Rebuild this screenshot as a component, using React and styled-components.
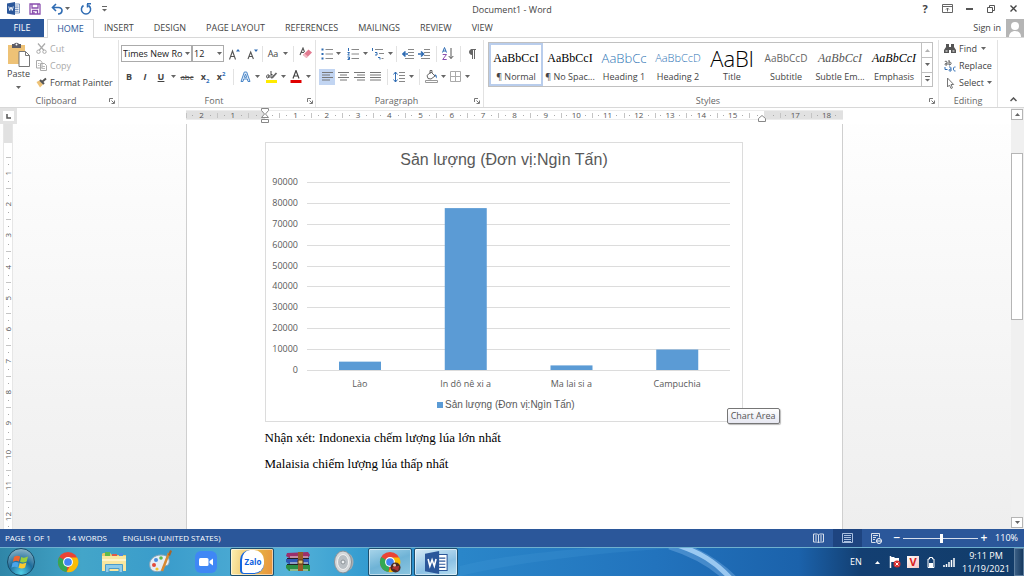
import React from "react";
import styled, { createGlobalStyle, css } from "styled-components";

const UI = `"Open Sans", "Noto Sans", sans-serif`;
const INK = "#444";
const BLUE = "#2b579a";
const LINE = "#d8d8d8";

const Global = createGlobalStyle`
  * { box-sizing: border-box; }
  body { margin: 0; background: #fff; font-family: ${UI}; font-size: 9px; line-height: 12px; color: ${INK}; }
  button, select, input { font: inherit; color: inherit; margin: 0; }
  button { border: 0; padding: 0; background: none; white-space: nowrap; }
  p, h1 { margin: 0; font-weight: 400; }
  svg { display: block; flex: none; }
`;

const Window = styled.div`
  display: flex;
  flex-direction: column;
  min-height: 100vh;
`;

/* ---------- title bar ---------- */
const TitleBar = styled.header`
  display: grid;
  grid-template-columns: 1fr auto 1fr;
  align-items: center;
  height: 19px;
  padding: 0 0 2px;
`;
const QuickAccess = styled.div`
  display: flex;
  align-items: center;
  padding-left: 5px;
`;
const WindowControls = styled.div`
  display: flex;
  align-items: center;
  justify-content: flex-end;
`;
const DocTitle = styled.h1`
  font-size: 9px;
  line-height: 12px;
  padding-top: 2px;
`;
const IconButton = styled.button`
  display: flex;
  align-items: center;
  justify-content: center;
  width: ${(p) => p.$w || 16}px;
  height: 16px;
  ${(p) => p.$active && css`background: #c2d5f2;`}
`;

/* ---------- tabs ---------- */
const TabBar = styled.nav`
  display: flex;
  height: 19px;
  border-bottom: 1px solid ${LINE};
`;
const Tab = styled.button`
  padding: 0 10px;
  ${(p) => p.$file && css`width: 44px; background: ${BLUE}; color: #fff; margin-right: 3px; padding: 0;`}
  ${(p) => p.$active && css`
    height: 19px; width: 47px; padding: 0; color: ${BLUE}; background: #fff;
    border: 1px solid ${LINE}; border-bottom: 0;
  `}
`;
const SignIn = styled.div`
  display: flex;
  align-items: center;
  gap: 5px;
  margin-left: auto;
  a { color: inherit; text-decoration: none; }
`;

/* ---------- ribbon ---------- */
const Ribbon = styled.section`
  display: flex;
  height: 70px;
  padding: 2px 0 0;
  border-bottom: 1px solid ${LINE};
`;
const Group = styled.div`
  display: flex;
  flex-direction: column;
  flex: ${(p) => (p.$grow ? "1 1 0" : "none")};
  min-width: 0;
  width: ${(p) => (p.$w ? p.$w + "px" : "auto")};
  padding: 0 ${(p) => p.$pad ?? 3}px;
  border-right: 1px solid #e2e2e2;
`;
const GroupBody = styled.div`
  display: flex;
  flex-direction: ${(p) => (p.$column ? "column" : "row")};
  flex: 1;
  min-height: 0;
  padding-top: ${(p) => (p.$column ? 2 : 0)}px;
`;
const GroupFooter = styled.footer`
  display: flex;
  align-items: center;
  height: 13px;
  span { flex: 1; text-align: center; color: #666; }
`;
const PasteButton = styled.button`
  display: flex;
  flex-direction: column;
  align-items: center;
  width: 31px;
  padding-top: 2px;
  gap: 1px;
`;
const CommandList = styled.div`
  display: flex;
  flex-direction: column;
  padding-left: 2px;
`;
const Command = styled.button`
  display: flex;
  align-items: center;
  gap: 3px;
  height: 17px;
  color: ${(p) => (p.disabled ? "#aaa" : INK)};
`;
const ToolRow = styled.div`
  display: flex;
  align-items: center;
  height: 23px;
`;
const Separator = styled.span`
  width: ${(p) => p.$w || 8}px;
  height: 16px;
  background: linear-gradient(#e2e2e2, #e2e2e2) center / 1px 100% no-repeat;
`;
const Combo = styled.div`
  position: relative;
  width: ${(p) => p.$w}px;
  select {
    appearance: none;
    width: 100%;
    height: 17px;
    padding: 0 7px 0 1px;
    border: 1px solid #ababab;
    border-radius: 0;
    background: #fff;
    color: #222;
  }
  svg { position: absolute; right: 2px; top: 7px; }
`;
const Letter = styled.span`
  font-size: ${(p) => p.$size || 9}px;
  font-weight: ${(p) => (p.$bold ? 700 : 400)};
  font-style: ${(p) => (p.$italic ? "italic" : "normal")};
  text-decoration: ${(p) => p.$line || "none"};
  sub, sup { font-size: 6px; line-height: 0; color: #2b6cb8; }
`;

const Gallery = styled.div`
  display: flex;
  flex: 1;
  height: 45px;
  margin: 2px 2px 0 1px;
  border: 1px solid #c0c0c0;
`;
const StyleTiles = styled.div`
  display: grid;
  grid-template-columns: repeat(8, 1fr);
  flex: 1;
  min-width: 0;
`;
const StyleTile = styled.button`
  display: flex;
  flex-direction: column;
  justify-content: space-between;
  align-items: center;
  min-width: 0;
  padding: 0 1px 1px;
  border: 2px solid ${(p) => (p.$active ? "#b9cdec" : "transparent")};
`;
const Sample = styled.span`
  height: 26px;
  line-height: 26px;
  font-family: ${(p) => (p.$serif ? `"Liberation Serif", serif` : UI)};
  font-size: ${(p) => p.$size || 12}px;
  font-weight: ${(p) => (p.$light ? 300 : 400)};
  font-style: ${(p) => (p.$italic ? "italic" : "normal")};
  color: ${(p) => p.$color || "#000"};
`;
const GalleryScroll = styled.div`
  display: grid;
  grid-template-rows: repeat(3, 1fr);
  width: 11px;
  border-left: 1px solid #c0c0c0;
  button { display: flex; align-items: center; justify-content: center; }
  button:disabled { opacity: 0.5; }
  button + button { border-top: 1px solid #c0c0c0; }
`;
const CollapseArea = styled.div`
  display: flex;
  align-items: flex-end;
  justify-content: flex-end;
  width: 26px;
  padding-right: 3px;
`;

/* ---------- document area ---------- */
const Workspace = styled.main`
  display: grid;
  grid-template-columns: 17px minmax(0, 1fr) 13px;
  grid-template-rows: 16px minmax(0, 1fr);
  flex: 1;
  background: linear-gradient(#fff, #fdfdfd 10%, #eeeeee);
`;
const TabStop = styled.button`
  display: flex;
  align-items: center;
  justify-content: center;
  border: 3px solid #e3e3e3;
  background: #fff;
`;
const RulerTrack = styled.div`
  display: flex;
  justify-content: center;
  align-items: flex-start;
  padding-top: 2px;
  background: #fff;
`;
const Ruler = styled.div`
  position: relative;
  display: grid;
  grid-template-columns: repeat(21, 1fr);
  width: 657px;
  height: 10px;
  border: solid #ececec;
  border-width: 1px 0;
  background: linear-gradient(90deg, #e1e1e1 12%, #fff 12%, #fff 88%, #e1e1e1 88%);
`;
const RulerCell = styled.span`
  display: flex;
  align-items: center;
  justify-content: space-between;
  font-size: 8px;
  line-height: 8px;
  color: #555;
  padding-right: 6px;
  &::before { content: ""; width: 1px; height: 5px; background: #c4c4c4; }
`;
const Dot = styled.i`
  width: 1px;
  height: 1px;
  background: #aaa;
`;
const Marker = styled.span`
  position: absolute;
  left: ${(p) => p.$at};
  top: ${(p) => p.$top || 0}px;
`;
const SideRuler = styled.div`
  display: flex;
  flex-direction: column;
  width: 10px;
  height: 100%;
  margin-left: 3px;
  border: solid #e6e6e6;
  border-width: 0 1px;
  background: #fff;
`;
const SideMargin = styled.div`
  flex: none;
  height: 19px;
  background: #e1e1e1;
`;
const SideTicks = styled.div`
  flex: 1 1 0;
  min-height: 0;
  padding-top: 14px;
  overflow-x: visible;
  overflow-y: clip;
`;
const SideCell = styled.div`
  display: flex;
  flex-direction: column;
  align-items: center;
  justify-content: space-between;
  height: 31px;
  padding-bottom: 6px;
  font-size: 8px;
  line-height: 8px;
  color: #555;
  &:nth-child(3n) { height: 32px; }
  &::before { content: ""; width: 5px; height: 1px; background: #c4c4c4; }
  span { writing-mode: vertical-rl; transform: rotate(180deg); }
`;
const PageArea = styled.div`
  display: flex;
  justify-content: center;
  min-width: 0;
`;
const Page = styled.article`
  width: 657px;
  padding: 18px 78px 0;
  border: solid #cfcfcf;
  border-width: 0 1px;
  background: #fff;
  font-family: "Liberation Serif", serif;
  font-size: 13px;
  line-height: 26px;
  color: #000;
`;
const ChartFrame = styled.figure`
  position: relative;
  width: 478px;
  margin: 0 0 3px;
  border: 1px solid #dcdcdc;
`;
const Tooltip = styled.span`
  position: absolute;
  right: -38px;
  bottom: -3px;
  padding: 1px 3px;
  border: 1px solid #767676;
  border-radius: 2px;
  background: linear-gradient(#fff, #e6e7f1);
  font: 9px/12px ${UI};
  color: #555;
  box-shadow: 1px 1px 1px #bbb;
`;
const ScrollBar = styled.div`
  display: flex;
  flex-direction: column;
  grid-row: 1 / 3;
  grid-column: 3;
  padding: 1px 1px 1px 0;
  background: #f0f0f0;
`;
const ScrollArrow = styled.button`
  display: flex;
  align-items: center;
  justify-content: center;
  height: 11px;
  border: 1px solid #b5b5b5;
  background: #fff;
`;
const ScrollTrack = styled.div`
  flex: 1;
  display: grid;
  grid-template-rows: 33fr 168fr 197fr;
`;
const ScrollThumb = styled.div`
  grid-row: 2;
  border: 1px solid #b5b5b5;
  background: #fff;
`;

/* ---------- status bar ---------- */
const StatusBar = styled.footer`
  display: flex;
  align-items: center;
  height: 18px;
  padding: 0 6px 0 5px;
  background: ${BLUE};
  color: #fff;
  gap: 16px;
  font-size: 8px;
`;
const ViewControls = styled.div`
  display: flex;
  align-items: center;
  margin-left: auto;
`;
const ViewButton = styled.button`
  display: flex;
  align-items: center;
  justify-content: center;
  width: 29px;
  height: 18px;
  background: ${(p) => (p.$active ? "#1e4480" : "none")};
`;
const ZoomStep = styled.button`
  width: 12px;
  font-size: 12px;
  font-weight: 600;
`;
const ZoomRange = styled.input`
  appearance: none;
  width: 75px;
  height: 10px;
  background: linear-gradient(#d5deec, #d5deec) center / 100% 1px no-repeat;
  &::-webkit-slider-thumb { appearance: none; width: 3px; height: 9px; background: #fff; }
`;
const ZoomValue = styled.button`
  width: 28px;
  font-size: 9px;
  text-align: right;
`;

/* ---------- taskbar ---------- */
const Taskbar = styled.footer`
  position: relative;
  display: flex;
  align-items: stretch;
  height: 29px;
  border-top: 1px solid #6fb0cf;
  color: #fff;
  background: linear-gradient(90deg, #2f86a8, #43a5c9 8%, #3a9ccb 16%, #55b2d8 28%, #339bd0 36%, #2a86c9 45%, #2273bd 64%, #1b62ab 78%, #133f72 84%, #123c69);
`;
const Glow = styled.svg`
  position: absolute;
  inset: 0;
  width: 100%;
  height: 100%;
`;
const StartButton = styled.button`
  position: relative;
  width: 44px;
  padding-left: 7px;
  margin-right: 2px;
`;
const TaskList = styled.div`
  position: relative;
  display: flex;
  gap: 2px;
`;
const highlights = {
  gold: "linear-gradient(100deg, #fdf0b4, #e6b145 60%, #e9923c)",
  glass: "linear-gradient(160deg, #a9d5ea, #6fb3d6 50%, #8cc6e0)",
  bright: "linear-gradient(160deg, #d7ebf6, #8cc1e4 60%, #b5def2)",
};
const TaskButton = styled.button`
  display: flex;
  align-items: center;
  justify-content: center;
  width: 44px;
  ${(p) => p.$look && css`
    background: ${highlights[p.$look]};
    border: 1px solid #1d4f6e;
    box-shadow: inset 0 0 0 1px #ffffff88;
    border-radius: 2px;
  `}
`;
const Tray = styled.div`
  position: relative;
  display: flex;
  align-items: center;
  margin-left: auto;
`;
const TrayItem = styled.button`
  display: flex;
  align-items: center;
  justify-content: center;
  width: ${(p) => p.$w || 18}px;
`;
const Clock = styled.time`
  width: 56px;
  text-align: center;
  line-height: 13px;
  white-space: pre-line;
`;
const ShowDesktop = styled.button`
  align-self: stretch;
  width: 10px;
  border: 1px solid #5e7fa0;
  background: linear-gradient(90deg, #3a5f85, #16385e);
`;

/* ---------- icons ---------- */
const Svg = ({ w = 12, h, v, children, ...rest }) => (
  <svg width={w} height={h ?? w} viewBox={v || `0 0 ${w} ${h ?? w}`} fill="none" aria-hidden="true" {...rest}>
    {children}
  </svg>
);
const Caret = ({ up }) => (
  <Svg w={5} h={3}><path d={up ? "M0 3 2.5 0 5 3z" : "M0 0h5L2.5 3z"} fill="#666" /></Svg>
);
const DropDown = ({ w = 8, label }) => (
  <IconButton $w={w} aria-label={label}><Caret /></IconButton>
);
const WordMark = ({ size = 13 }) => (
  <Svg w={size} v="0 0 26 26">
    <path d="M14 4h11v18H14z" fill="#fff" stroke={BLUE} strokeWidth="1.2" />
    <path d="M16 8h7M16 11.500h7M16 15h7M16 18.500h7" stroke={BLUE} strokeWidth="1.3" />
    <path d="M0 3 16 0v26L0 23z" fill={BLUE} />
    <path d="m3.500 9 2 8 2.500-7 2.500 7 2-8" stroke="#fff" strokeWidth="1.800" />
  </Svg>
);
const SaveIcon = () => (
  <Svg w={12}>
    <path d="M1 1h9.500l.5.500V11H1zM3 1v4h6V1M3.500 11V7.500h5V11M5 9v2" stroke="#8a4fae" strokeWidth="1.300" />
  </Svg>
);
const UndoIcon = () => (
  <Svg w={13} h={12}><path d="M5 1 1.500 4.500 5 8M2 4.500h5.500c5 0 4.500 6-.5 6.500" stroke="#2f6cb3" strokeWidth="1.600" /></Svg>
);
const RedoIcon = () => (
  <Svg w={12}><path d="M8.500 2.500a4.600 4.600 0 1 1-5 0M7 .8h4M7.500 1v3.500" stroke="#2f6cb3" strokeWidth="1.500" /></Svg>
);
const CustomizeIcon = () => (
  <Svg w={5} h={6}><path d="M0 .5h5" stroke="#666" /><path d="M0 3h5L2.500 5.500z" fill="#666" /></Svg>
);
const PasteIcon = () => (
  <Svg w={23} h={25}>
    <path d="M1 3h17v19H1z" fill="#eec276" />
    <path d="M5 2h2a3 3 0 0 1 5 0h2v4H5z" fill="#5c5c66" />
    <circle cx="9.500" cy="2.500" r="1" fill="#fff" />
    <path d="M12 9.500h6.500l4 4v11H12z" fill="#fff" stroke="#777" />
    <path d="M18.500 9.500v4h4" stroke="#777" />
  </Svg>
);
const CutIcon = () => (
  <Svg w={11}><path d="m2 .5 6 7M9 .5l-6 7" stroke="#aaa" strokeWidth="1.200" /><circle cx="2.500" cy="8.700" r="1.700" stroke="#aaa" /><circle cx="8.500" cy="8.700" r="1.700" stroke="#aaa" /></Svg>
);
const CopyIcon = () => (
  <Svg w={11}><path d="M.5.5h4l1.500 2v5.500H.5zM4.500 3.500h4l2 2v5h-6z" fill="#fff" stroke="#aaa" /><path d="M2 3.500h1.500M2 5.500h1.500M6 6.500h3M6 8.500h3" stroke="#bbb" /></Svg>
);
const PainterIcon = () => (
  <Svg w={11}><path d="m.5 5 3-1.500 3.500 4L4 10.500z" fill="#eec276" /><path d="m4 3 4 4M6.500 4.500l3.500-3" stroke="#555" strokeWidth="2" /></Svg>
);
const LauncherIcon = () => (
  <Svg w={6}><path d="M.5 4V.5H4M2.500 2.500 5 5M5.500 2.500v3h-3" stroke="#777" /></Svg>
);
const ClearIcon = () => (
  <Svg w={13}>
    <path d="m1 8 3-7 1.500 4M2 5.500h3" stroke="#555" strokeWidth="1.100" />
    <path d="m4 8 5.500-5.500L13 5.500 7.500 11z" fill="#e27a90" /><path d="m4 8 1.500-1.500L9 9.500 7.500 11z" fill="#f3b9c4" />
  </Svg>
);
const GrowIcon = ({ down }) => (
  <Svg w={11} h={12}>
    <path d={down ? "m1 11 2.700-7 2.700 7M2 8.500h3.500" : "m.5 11.500 3-8.500 3 8.500M1.500 8.500h4"} stroke="#555" strokeWidth="1.100" />
    <path d={down ? "M7 1.500h4L9 4z" : "M7 3.500h4L9 1z"} fill="#2f6cb3" />
  </Svg>
);
const EffectsIcon = () => (
  <Svg w={11} h={12}><path d="M1 10.500 4.300 1h2.400L10 10.500H8L7.300 8H3.700L3 10.500zM4.300 6.300h2.400L5.500 3z" fill="#e4effa" stroke="#4a86c8" /></Svg>
);
const HighlightIcon = () => (
  <Svg w={13}>
    <path d="M1 10h11v3H1z" fill="#ffeb00" />
    <path d="M3.500 4.500C1.500 4.500 1 8 2.500 8s1.500-3 1.500-3v3M6 1v7c3 0 3-4 0-3.500" stroke="#444" />
    <path d="m7 8 4.500-5" stroke="#666" strokeWidth="1.800" />
  </Svg>
);
const FontColorIcon = () => (
  <Svg w={12} h={13}><path d="m3 8.500 3-8 3 8M4 6h4" stroke="#444" strokeWidth="1.200" /><path d="M.5 10h11v3H.5z" fill="#e00000" /></Svg>
);
const BulletsIcon = () => (
  <Svg w={12}><path d="M.5 1.500h2M.5 6h2M.5 10.500h2" stroke="#2f6cb3" strokeWidth="2" /><path d="M4.500 1.500H12M4.500 6H12M4.500 10.500H12" stroke="#888" /></Svg>
);
const NumberingIcon = () => (
  <Svg w={12}><path d="M1.500 0v3M.5 4.500h2L.8 7h1.900M.5 9h2v2.500h-2M1 10.300h1.500" stroke="#2f6cb3" /><path d="M4.500 1.500H12M4.500 6H12M4.500 10.500H12" stroke="#888" /></Svg>
);
const MultilevelIcon = () => (
  <Svg w={13} h={12}><path d="M1.500 0v3M4 4.500h2v2.500H4M7 9.500h2v2" stroke="#2f6cb3" /><path d="M4 1.500h8M8 5.500h5M10.500 10.500h2" stroke="#888" /></Svg>
);
const IndentIcon = ({ right }) => (
  <Svg w={12} h={10}>
    <path d="M6 .5h6M6 3.500h6M6 6.500h6M3 9.500h9" stroke="#888" />
    <path d={right ? "M0 5h5M3 2.500 5.500 5 3 7.500" : "M6 5H1M3.500 2.500 1 5l2.500 2.500"} stroke="#2f6cb3" strokeWidth="1.600" />
  </Svg>
);
const SortIcon = () => (
  <Svg w={12} h={13}>
    <path d="m.5 5.500 2-5 2 5M1 4h3" stroke="#2f6cb3" /><path d="M.7 7.500h3.800l-3.800 5h4" stroke="#8a4fae" />
    <path d="M9 1v10.500M6.700 9 9 11.500 11.300 9" stroke="#555" />
  </Svg>
);
const PilcrowIcon = () => (
  <Svg w={8} h={10}><path d="M4 .5a2.500 2.500 0 0 0 0 5z" fill="#666" stroke="#666" /><path d="M4.500 0v10M6.500 0v10M3 .5h5" stroke="#666" /></Svg>
);
const AlignIcon = ({ kind }) => {
  const spans = { left: [[0, 11], [0, 8]], center: [[0, 11], [2, 9]], right: [[0, 11], [3, 11]], justify: [[0, 11], [0, 11]] }[kind];
  return (
    <Svg w={11} h={9}>
      {[0.5, 3, 5.5, 8].map((y, i) => <path key={y} d={`M${spans[i % 2][0]} ${y}H${spans[i % 2][1]}`} stroke="#777" />)}
    </Svg>
  );
};
const SpacingIcon = () => (
  <Svg w={12}><path d="M2.500 1v10M.5 3.500l2-2.500 2 2.500M.5 8.500l2 2.500 2-2.500" stroke="#2f6cb3" /><path d="M6 1.500h6M6 4.500h6M6 7.500h6M6 10.500h6" stroke="#888" /></Svg>
);
const ShadingIcon = () => (
  <Svg w={13}>
    <path d="m2 5.500 4-3.500 4 4-4 3-3-.5z" fill="#fff" stroke="#666" /><path d="M5 4V.5h2V3" stroke="#666" />
    <path d="M9.500 4.500c2.500 0 2.500 2 2 4z" fill="#2f6cb3" /><path d="M.5 10.500h12v2H.5z" fill="#fff" stroke="#999" />
  </Svg>
);
const BordersIcon = () => (
  <Svg w={11}><path d="M.5.5h10v10H.5zM5.500.5v10M.5 5.500h10" stroke="#aaa" /></Svg>
);
const FindIcon = () => (
  <Svg w={12} h={11}><path d="M2 1h3v3h2V1h3v3l2 3v3H7V7H5v3H0V7l2-3z" fill="#555" /><path d="M1.500 8h2M8.500 8h2" stroke="#fff" /></Svg>
);
const ReplaceIcon = () => (
  <Svg w={12}>
    <path d="M.8 1.500c3-.8 2.200 1 2.200 3.500-3 .5-2.500-2 0-1.800M5 0v5c3 0 2.500-3.500 0-3" stroke="#555" />
    <path d="M5 7c2.500-.5 2 1 2 4-2.800.5-2.500-2 0-2M11.500 7c-2.500-1-3 4.500 0 4M1 7v2.500h2.500" stroke="#2f6cb3" />
  </Svg>
);
const SelectIcon = () => (
  <Svg w={12}><path d="M3.500 1v9l2-2 1.500 3.500 1.500-.7L7 7.500h2.700z" fill="#fff" stroke="#777" /></Svg>
);
const ChevronUp = () => (
  <Svg w={7} h={5}><path d="M.5 4 3.500 1l3 3" stroke="#555" strokeWidth="1.500" /></Svg>
);
const RibbonOptionsIcon = () => (
  <Svg w={11} h={9}><path d="M.5.5h10v8H.5zM.5 2.500h10M5.500 7.500V4M4 5.500 5.500 4 7 5.500" stroke="#666" /></Svg>
);
const Avatar = () => (
  <Svg w={18} h={18}><path d="M0 0h18v18H0z" fill="#b5b5b5" /><circle cx="9" cy="7" r="4" fill="#fff" /><path d="M3 18c0-8 12-8 12 0z" fill="#fff" /></Svg>
);
const HourglassMarker = () => (
  <Svg w={8} h={15}>
    <path d="M.5.5h7v2l-3 3.500 3 3.500h-7L3.500 6 .5 2.500z" fill="#fff" stroke="#888" />
    <path d="M.5 11.500h7v3h-7z" fill="#fff" stroke="#888" />
  </Svg>
);
const RightMarker = () => (
  <Svg w={8} h={7}><path d="M.5 6.500V3.500L4 .5l3.500 3v3z" fill="#fff" stroke="#888" /></Svg>
);
const ReadIcon = () => (
  <Svg w={11} h={10}><path d="M.5 1h4l1 1 1-1h4v8h-4l-1 1-1-1h-4zM5.500 2v8" stroke="#d5deec" /><path d="M2 3h2M2 5h2M2 7h2M7 3h2M7 5h2M7 7h2" stroke="#d5deec" /></Svg>
);
const PrintIcon = () => (
  <Svg w={11} h={10}><path d="M.5.5h10v9H.5zM2 2.500h7M2 4.500h7M2 6.500h7M2 8.500h7" stroke="#a9bfe0" /></Svg>
);
const WebIcon = () => (
  <Svg w={11} h={11}><path d="M.5.5h8v4M.5.5v9h4M2 2.500h5M2 4.500h3M2 6.500h2" stroke="#d5deec" /><circle cx="8" cy="8" r="2.500" fill={BLUE} stroke="#fff" /><path d="M6 8h4" stroke="#fff" /></Svg>
);
const StartOrb = () => (
  <Svg w={28} h={28}>
    <defs><radialGradient id="orb" cx=".5" cy=".9" r=".9"><stop offset="0" stopColor="#4fd0e8" /><stop offset=".5" stopColor="#1f6d9c" /><stop offset="1" stopColor="#8fb6c8" /></radialGradient></defs>
    <circle cx="14" cy="14" r="13.500" fill="url(#orb)" stroke="#164b68" />
    <path d="M7 9c2-1.500 4-1.500 6.200-.5l-1.200 5c-2-1-4-1-6.200.3z" fill="#f0642f" />
    <path d="M14.200 9c2.200 1 4.300.8 6.800-.5l-1.300 5c-2.200 1.300-4.500 1.200-6.700.3z" fill="#9bcf3a" />
    <path d="M5.500 15c2-1.200 4-1.200 6.200-.3l-1.200 4.800c-2-1-4-.8-6 .3z" fill="#4aa4ea" />
    <path d="M12.700 15c2.200 1 4.500.8 6.700-.4l-1.300 4.900c-2.200 1.300-4.300 1.200-6.600.2z" fill="#fcc92e" />
  </Svg>
);
const ChromeIcon = ({ badge }) => (
  <Svg w={22} v="0 0 24 24">
    <circle cx="12" cy="12" r="11" fill="#ea4335" />
    <path d="M2.500 6.500 12 12l-1.500 11A11 11 0 0 1 2.500 6.500z" fill="#34a853" />
    <path d="M12 7h10a11 11 0 0 1-11.500 16l5-9z" fill="#fbbc05" />
    <circle cx="12" cy="12" r="5.400" fill="#fff" /><circle cx="12" cy="12" r="4.200" fill="#4285f4" />
    {badge && <><circle cx="18" cy="18" r="5.500" fill="#4a2a25" /><path d="m14 19 3-4 2 2 3-1-1 6-4-2z" fill="#a33" /><circle cx="17" cy="15.500" r="1.500" fill="#e9c9b4" /></>}
  </Svg>
);
const FolderIcon = () => (
  <Svg w={26} h={24}>
    <path d="M2 3h7l2 2h14v16H1V4z" fill="#e9c867" />
    <path d="M4 2h5v5H4z" fill="#5db94c" /><path d="M11 4h5v3h-5z" fill="#e05a4a" /><path d="M18 3h4v4h-4z" fill="#4b8fe0" />
    <path d="M1 6h24v15H1z" fill="#f9e7a0" /><path d="M1 10h24" stroke="#fff4c8" strokeWidth="2" />
    <path d="M4.500 22.500v-8h17v8h-3.500v-4H8v4z" fill="#8ccbea" stroke="#4b9ccb" />
  </Svg>
);
const PaintIcon = () => (
  <Svg w={25} h={24}>
    <path d="M2 17C0 10 6 5 13 5s9 4 8 8-5 2-6 4 0 4-4 4.500S3 21 2 17z" fill="#e5eef5" stroke="#8aa4b5" />
    <circle cx="6" cy="15" r="2" fill="#e34b3b" /><circle cx="8" cy="10" r="2" fill="#4b8fe0" /><circle cx="13" cy="8" r="1.800" fill="#5db94c" /><circle cx="9" cy="19" r="1.600" fill="#f3c531" />
    <path d="M21 3 14 21" stroke="#d78931" strokeWidth="2.500" /><path d="m20 5 2-5 2 1-2 5z" fill="#a8642a" />
  </Svg>
);
const ZoomAppIcon = () => (
  <Svg w={22}><rect width="22" height="22" rx="6" fill="#3f87f5" /><rect x="4" y="7" width="9.500" height="8" rx="1.500" fill="#fff" /><path d="m14.500 10 3.500-2.500v7L14.500 12z" fill="#fff" /></Svg>
);
const ZaloBadge = styled.span`
  display: flex;
  align-items: center;
  justify-content: center;
  width: 24px;
  height: 24px;
  border: solid #1366e0;
  border-width: 0 0 1px 2px;
  border-radius: 10px 10px 10px 4px;
  background: #fff;
  color: #0b5fe0;
  font-size: 8px;
  font-weight: 700;
`;
const ArchiveIcon = () => (
  <Svg w={26} h={20}>
    <path d="m2 1 21-1 2 3-2 3H4L1 4z" fill="#9c2f6c" /><path d="M1 7h23v5H4L1 10z" fill="#2f57b5" /><path d="M1 13h24v6H4l-3-3z" fill="#2b8f45" />
    <path d="M5 5h18M5 11h18M5 18h18" stroke="#efe7d6" /><path d="M2 6.500h22M2 12.500h22" stroke="#222" />
    <path d="M13 0h5v19h-5z" fill="#9a5a28" /><path d="M13 8h5v4h-5z" fill="#e5c36b" stroke="#5a3512" />
  </Svg>
);
const SpeakerIcon = () => (
  <Svg w={20} h={24}>
    <ellipse cx="13" cy="12" rx="6.500" ry="9" fill="#a7adb2" /><ellipse cx="9" cy="12" rx="8.500" ry="11" fill="#d5d8da" stroke="#8b9196" />
    <ellipse cx="9" cy="12" rx="5.500" ry="7.500" fill="#b8bec3" stroke="#f2f2f2" /><circle cx="9" cy="12" r="2" fill="#eef1f3" stroke="#8b9196" />
  </Svg>
);
const FlagIcon = () => (
  <Svg w={12}><path d="M1.500 0v12" stroke="#fff" strokeWidth="1.500" /><path d="M2 1h3l1 1h4v5H6L5 6H2z" fill="#fff" /><circle cx="8" cy="8" r="3.500" fill="#d93030" /><path d="m6.500 6.500 3 3m0-3-3 3" stroke="#fff" /></Svg>
);
const UnikeyBadge = styled.span`
  width: 12px;
  height: 12px;
  line-height: 12px;
  background: linear-gradient(135deg, #fff, #f5c5c0);
  color: #d81e1e;
  font-size: 11px;
  font-weight: 700;
`;
const BatteryIcon = () => (
  <Svg w={8} h={11}><path d="M2.500.5h3v1.500h1.500v8.500H1V2h1.500z" stroke="#fff" /><path d="M2 6h4v4H2z" fill="#fff" /></Svg>
);
const SignalIcon = () => (
  <Svg w={12} h={9}><path d="M1 9V7M3.500 9V6M6 9V4M8.500 9V2M11 9V0" stroke="#fff" strokeWidth="1.500" /></Svg>
);

/* ---------- chart ---------- */
const data = [
  { name: "Lào", value: 4000 },
  { name: "In dô nê xi a", value: 77500 },
  { name: "Ma lai si a", value: 2200 },
  { name: "Campuchia", value: 9800 },
];
const SERIES = "Sản lượng (Đơn vị:Ngìn Tấn)";
const ChartDrawing = styled.svg`
  width: 100%;
  height: auto;
  font-family: ${UI};
  font-size: 9px;
  fill: #595959;
  .title { font: 16px "Liberation Sans", sans-serif; }
  .legend { font: 10px "Liberation Sans", sans-serif; }
`;
const Chart = () => {
  const left = 41, right = 464, top = 39, base = 227;
  const slot = (right - left) / data.length;
  const y = (v) => base - (v / 90000) * (base - top);
  return (
    <ChartDrawing viewBox="0 0 476 278" role="img" aria-label={SERIES}>
      <text className="title" x="238" y="22" textAnchor="middle">{SERIES}</text>
      {Array.from({ length: 10 }, (_, i) => i * 10000).map((v) => (
        <g key={v}>
          <path d={`M${left} ${Math.round(y(v)) + 0.5}H${right}`} stroke="#dcdcdc" />
          <text x="32" y={Math.round(y(v)) + 3} textAnchor="end">{v}</text>
        </g>
      ))}
      {data.map((d, i) => (
        <g key={d.name}>
          <rect x={left + slot * i + 32} y={y(d.value)} width="42" height={base - y(d.value)} fill="#5b9bd5" />
          <text x={left + slot * (i + 0.5)} y={base + 17} textAnchor="middle">{d.name}</text>
        </g>
      ))}
      <rect x="171" y="259" width="6" height="6" fill="#5b9bd5" />
      <text className="legend" x="179" y="265">{SERIES}</text>
    </ChartDrawing>
  );
};

const horizontal = [2, 1, "", ...Array.from({ length: 15 }, (_, i) => i + 1), "", 17, 18];
const vertical = Array.from({ length: 12 }, (_, i) => i + 1);
const styleSet = [
  { name: "¶ Normal", text: "AaBbCcI", active: true, serif: true },
  { name: "¶ No Spac...", text: "AaBbCcI", serif: true },
  { name: "Heading 1", text: "AaBbCc", size: 13, color: "#2e74b5", light: true },
  { name: "Heading 2", text: "AaBbCcD", size: 11, color: "#2e74b5", light: true },
  { name: "Title", text: "AaBl", size: 22, light: true },
  { name: "Subtitle", text: "AaBbCcD", size: 10, color: "#666" },
  { name: "Subtle Em...", text: "AaBbCcI", serif: true, italic: true, color: "#555" },
  { name: "Emphasis", text: "AaBbCcI", serif: true, italic: true },
];
const Footer = ({ children }) => (
  <GroupFooter><span>{children}</span><button aria-label={`${children} settings`}><LauncherIcon /></button></GroupFooter>
);

export default function App() {
  return (
    <Window>
      <Global />
      <TitleBar>
        <QuickAccess>
          <IconButton aria-label="Word"><WordMark /></IconButton>
          <IconButton $w={28} aria-label="Save"><SaveIcon /></IconButton>
          <IconButton aria-label="Undo"><UndoIcon /></IconButton>
          <DropDown w={5} label="Undo list" />
          <IconButton $w={32} aria-label="Repeat"><RedoIcon /></IconButton>
          <IconButton $w={5} aria-label="Customize"><CustomizeIcon /></IconButton>
        </QuickAccess>
        <DocTitle>Document1 - Word</DocTitle>
        <WindowControls>
          <IconButton $w={22} aria-label="Help"><Letter $size={11} $bold>?</Letter></IconButton>
          <IconButton $w={22} aria-label="Ribbon display"><RibbonOptionsIcon /></IconButton>
          <IconButton $w={22} aria-label="Minimize"><Svg w={7} h={2}><path d="M0 1h7" stroke="#555" strokeWidth="2" /></Svg></IconButton>
          <IconButton $w={22} aria-label="Restore"><Svg w={8}><path d="M2.500 2V.5h5v5H6M.5 2.500h5v5h-5z" stroke="#555" /></Svg></IconButton>
          <IconButton $w={22} aria-label="Close"><Svg w={7}><path d="m.5.5 6 6m0-6-6 6" stroke="#444" strokeWidth="1.400" /></Svg></IconButton>
        </WindowControls>
      </TitleBar>

      <TabBar>
        <Tab $file>FILE</Tab>
        <Tab $active>HOME</Tab>
        {["INSERT", "DESIGN", "PAGE LAYOUT", "REFERENCES", "MAILINGS", "REVIEW", "VIEW"].map((t) => <Tab key={t}>{t}</Tab>)}
        <SignIn><a href="#signin">Sign in</a><Avatar /></SignIn>
      </TabBar>

      <Ribbon>
        <Group $w={119}>
          <GroupBody>
            <PasteButton><PasteIcon />Paste<IconButton as="span" $w={8}><Caret /></IconButton></PasteButton>
            <CommandList>
              <Command disabled><CutIcon />Cut</Command>
              <Command disabled><CopyIcon />Copy</Command>
              <Command><PainterIcon />Format Painter</Command>
            </CommandList>
          </GroupBody>
          <Footer>Clipboard</Footer>
        </Group>

        <Group $w={197} $pad={2}>
          <GroupBody $column>
            <ToolRow>
              <Combo $w={71}>
                <select aria-label="Font"><option>Times New Ro</option></select><Caret />
              </Combo>
              <Combo $w={32}>
                <select aria-label="Font size"><option>12</option></select><Caret />
              </Combo>
              <IconButton $w={20} aria-label="Grow font"><GrowIcon /></IconButton>
              <IconButton aria-label="Shrink font"><GrowIcon down /></IconButton>
              <Separator $w={5} />
              <IconButton aria-label="Change case"><Letter>Aa</Letter></IconButton>
              <DropDown label="Change case options" />
              <Separator />
              <IconButton aria-label="Clear formatting"><ClearIcon /></IconButton>
            </ToolRow>
            <ToolRow>
              <IconButton aria-label="Bold"><Letter $bold>B</Letter></IconButton>
              <IconButton aria-label="Italic"><Letter $bold $italic>I</Letter></IconButton>
              <IconButton aria-label="Underline"><Letter $bold $line="underline">U</Letter></IconButton>
              <DropDown label="Underline options" />
              <IconButton $w={20} aria-label="Strikethrough"><Letter $line="line-through" $size={8}>abc</Letter></IconButton>
              <IconButton aria-label="Subscript"><Letter $bold>x<sub>2</sub></Letter></IconButton>
              <IconButton aria-label="Superscript"><Letter $bold>x<sup>2</sup></Letter></IconButton>
              <Separator />
              <IconButton aria-label="Text effects"><EffectsIcon /></IconButton>
              <DropDown label="Text effect options" />
              <IconButton $w={20} aria-label="Highlight"><HighlightIcon /></IconButton>
              <DropDown w={5} label="Highlight colors" />
              <IconButton $w={20} aria-label="Font color"><FontColorIcon /></IconButton>
              <DropDown w={5} label="Font colors" />
            </ToolRow>
          </GroupBody>
          <Footer>Font</Footer>
        </Group>

        <Group $w={168}>
          <GroupBody $column>
            <ToolRow>
              <IconButton aria-label="Bullets"><BulletsIcon /></IconButton>
              <DropDown label="Bullet options" />
              <IconButton $w={20} aria-label="Numbering"><NumberingIcon /></IconButton>
              <DropDown w={5} label="Numbering options" />
              <IconButton $w={20} aria-label="Multilevel list"><MultilevelIcon /></IconButton>
              <DropDown w={5} label="Multilevel options" />
              <Separator />
              <IconButton aria-label="Decrease indent"><IndentIcon /></IconButton>
              <IconButton aria-label="Increase indent"><IndentIcon right /></IconButton>
              <Separator />
              <IconButton aria-label="Sort"><SortIcon /></IconButton>
              <Separator />
              <IconButton aria-label="Show marks"><PilcrowIcon /></IconButton>
            </ToolRow>
            <ToolRow>
              <IconButton $active aria-label="Align left"><AlignIcon kind="left" /></IconButton>
              <IconButton aria-label="Center"><AlignIcon kind="center" /></IconButton>
              <IconButton aria-label="Align right"><AlignIcon kind="right" /></IconButton>
              <IconButton aria-label="Justify"><AlignIcon kind="justify" /></IconButton>
              <Separator />
              <IconButton aria-label="Line spacing"><SpacingIcon /></IconButton>
              <DropDown label="Line spacing options" />
              <Separator />
              <IconButton aria-label="Shading"><ShadingIcon /></IconButton>
              <DropDown label="Shading colors" />
              <IconButton aria-label="Borders"><BordersIcon /></IconButton>
              <DropDown label="Border options" />
            </ToolRow>
          </GroupBody>
          <Footer>Paragraph</Footer>
        </Group>

        <Group $grow>
          <GroupBody>
            <Gallery>
              <StyleTiles>
                {styleSet.map((s) => (
                  <StyleTile key={s.name} $active={s.active}>
                    <Sample $serif={s.serif} $size={s.size} $italic={s.italic} $color={s.color} $light={s.light}>{s.text}</Sample>
                    {s.name}
                  </StyleTile>
                ))}
              </StyleTiles>
              <GalleryScroll>
                <button aria-label="Previous row" disabled><Caret up /></button>
                <button aria-label="Next row"><Caret /></button>
                <button aria-label="More styles"><CustomizeIcon /></button>
              </GalleryScroll>
            </Gallery>
          </GroupBody>
          <Footer>Styles</Footer>
        </Group>

        <Group $w={59}>
          <GroupBody>
            <CommandList>
              <Command><FindIcon />Find<IconButton as="span" $w={8}><Caret /></IconButton></Command>
              <Command><ReplaceIcon />Replace</Command>
              <Command><SelectIcon />Select<Caret /></Command>
            </CommandList>
          </GroupBody>
          <GroupFooter><span>Editing</span></GroupFooter>
        </Group>
        <CollapseArea><IconButton aria-label="Collapse ribbon"><ChevronUp /></IconButton></CollapseArea>
      </Ribbon>

      <Workspace>
        <TabStop aria-label="Tab stop"><Svg w={5}><path d="M1 0v4h4" stroke="#555" strokeWidth="1.500" /></Svg></TabStop>
        <RulerTrack>
          <Ruler>
            {horizontal.map((n, i) => <RulerCell key={i}><Dot /><span>{n}</span><Dot /></RulerCell>)}
            <Marker $at="11.500%" $top={-3}><HourglassMarker /></Marker>
            <Marker $at="87.200%" $top={4}><RightMarker /></Marker>
          </Ruler>
        </RulerTrack>
        <ScrollBar>
          <ScrollArrow aria-label="Scroll up"><Caret up /></ScrollArrow>
          <ScrollTrack><ScrollThumb /></ScrollTrack>
          <ScrollArrow aria-label="Scroll down"><Caret /></ScrollArrow>
        </ScrollBar>
        <SideRuler>
          <SideMargin />
          <SideTicks>
            {vertical.map((n) => <SideCell key={n}><Dot /><span>{n}</span><Dot /></SideCell>)}
          </SideTicks>
        </SideRuler>
        <PageArea>
          <Page>
            <ChartFrame><Chart /><Tooltip role="tooltip">Chart Area</Tooltip></ChartFrame>
            <p>Nhận xét: Indonexia chếm lượng lúa lớn nhất</p>
            <p>Malaisia chiếm lượng lúa thấp nhất</p>
          </Page>
        </PageArea>
      </Workspace>

      <StatusBar>
        <span>PAGE 1 OF 1</span><span>14 WORDS</span><span>ENGLISH (UNITED STATES)</span>
        <ViewControls>
          <ViewButton aria-label="Read mode"><ReadIcon /></ViewButton>
          <ViewButton $active aria-label="Print layout"><PrintIcon /></ViewButton>
          <ViewButton aria-label="Web layout"><WebIcon /></ViewButton>
          <ZoomStep aria-label="Zoom out">−</ZoomStep>
          <ZoomRange type="range" min="0" max="100" defaultValue="52" aria-label="Zoom" />
          <ZoomStep aria-label="Zoom in">+</ZoomStep>
          <ZoomValue>110%</ZoomValue>
        </ViewControls>
      </StatusBar>

      <Taskbar>
        <Glow viewBox="0 0 1024 28" preserveAspectRatio="none" fill="none" aria-hidden="true">
          <path d="M460 28C520 14 600 4 680 0h-90C540 4 490 10 460 18z" fill="#4ba0da" opacity=".2" />
          <path d="M670-4c26 8 46 20 62 36" stroke="#8cc0f0" strokeWidth="11" opacity=".35" />
          <path d="M674-4c26 8 42 18 58 36" stroke="#a9d3f8" strokeWidth="5" opacity=".85" />
        </Glow>
        <StartButton aria-label="Start"><StartOrb /></StartButton>
        <TaskList>
          <TaskButton aria-label="Chrome"><ChromeIcon /></TaskButton>
          <TaskButton aria-label="Explorer"><FolderIcon /></TaskButton>
          <TaskButton aria-label="Paint"><PaintIcon /></TaskButton>
          <TaskButton aria-label="Zoom"><ZoomAppIcon /></TaskButton>
          <TaskButton $look="gold"><ZaloBadge>Zalo</ZaloBadge></TaskButton>
          <TaskButton aria-label="WinRAR"><ArchiveIcon /></TaskButton>
          <TaskButton aria-label="Sound"><SpeakerIcon /></TaskButton>
          <TaskButton $look="glass" aria-label="Chrome profile"><ChromeIcon badge /></TaskButton>
          <TaskButton $look="bright" aria-label="Word"><WordMark size={23} /></TaskButton>
        </TaskList>
        <Tray>
          <TrayItem $w={24}>EN</TrayItem>
          <TrayItem aria-label="Hidden icons"><Svg w={5} h={3}><path d="M0 3 2.500 0 5 3z" fill="#fff" /></Svg></TrayItem>
          <TrayItem aria-label="Action center"><FlagIcon /></TrayItem>
          <TrayItem><UnikeyBadge>V</UnikeyBadge></TrayItem>
          <TrayItem aria-label="Battery"><BatteryIcon /></TrayItem>
          <TrayItem aria-label="Network"><SignalIcon /></TrayItem>
          <Clock>{"9:11 PM\n11/19/2021"}</Clock>
          <ShowDesktop aria-label="Show desktop" />
        </Tray>
      </Taskbar>
    </Window>
  );
}
